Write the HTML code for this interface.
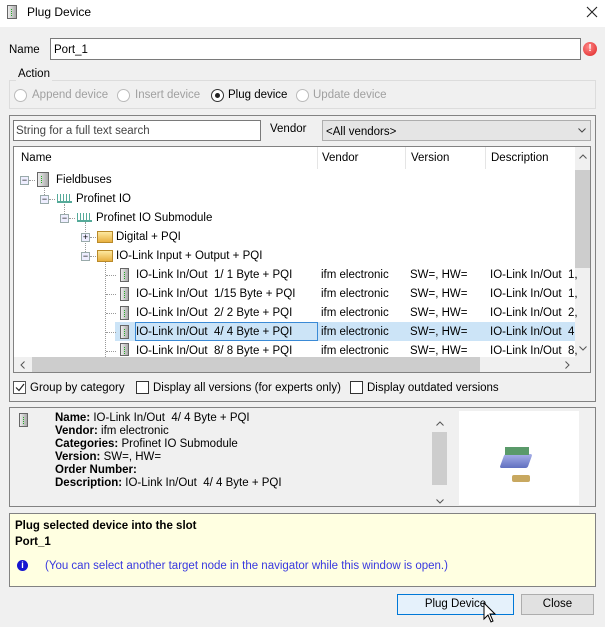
<!DOCTYPE html>
<html><head><style>
*{box-sizing:border-box;margin:0;padding:0}
body{width:605px;height:627px;background:#f0f0f0;font-family:"Liberation Sans",sans-serif;font-size:11.5px;color:#000;position:relative;overflow:hidden}
.a{position:absolute;white-space:nowrap}
.t{line-height:14px}
.ex{position:absolute;width:9px;height:9px;border:1px solid #9aa;background:#eef;font-size:9px;line-height:7px;text-align:center;color:#000}
.dev{position:absolute;width:9px;height:14px;border:1px solid #666;background:linear-gradient(90deg,#eee,#aaa);}
.dev:after{content:"";position:absolute;left:3px;top:3px;width:1px;height:7px;border-left:1px dotted #2a2}
.fold{position:absolute;width:16px;height:12px;background:linear-gradient(#fde9a0,#e8b040);border:1px solid #b98a2a}
.pnio{position:absolute;width:15px;height:9px;border-bottom:2px solid #5a9;background:repeating-linear-gradient(90deg,#5a9 0 1px,transparent 1px 3px)}
.cb{position:absolute;width:13px;height:13px;border:1px solid #333;background:#fff}
.rd{position:absolute;width:13px;height:13px;border:1px solid #bbb;border-radius:50%;background:#fff}
.dot{position:absolute;border-top:1px dotted #999;height:0}
.vdot{position:absolute;border-left:1px dotted #999;width:0}
</style></head><body>
<div class="a" style="left:0;top:0;width:605px;height:27px;background:#fff"></div>
<div class="dev" style="left:7px;top:5px;width:10px;height:14px"></div>
<div class="a t" style="left:27px;top:5px;font-size:12px">Plug Device</div>
<svg class="a" style="left:586px;top:6px" width="12" height="12" viewBox="0 0 12 12"><path d="M1 1 L11 11 M11 1 L1 11" stroke="#222" stroke-width="1.1"/></svg>

<div class="a t" style="left:9px;top:43px">Name</div>
<div class="a t" style="left:50px;top:38px;width:531px;height:22px;border:1px solid #7a7a7a;background:#fff;padding:4px 3px">Port_1</div>
<div class="a" style="left:583px;top:42px;width:14px;height:14px;border-radius:50%;background:radial-gradient(circle at 40% 35%,#f88,#d22);color:#fff;font-weight:bold;font-size:10px;text-align:center;line-height:14px">!</div>

<div class="a" style="left:9px;top:80px;width:587px;height:29px;border:1px solid #dcdcdc"></div>
<div class="a t" style="left:16px;top:67px;background:#f0f0f0;padding:0 2px">Action</div>
<div class="rd" style="left:14px;top:89px"></div><div class="a t" style="left:32px;top:88px;color:#a0a0a0">Append device</div>
<div class="rd" style="left:117px;top:89px"></div><div class="a t" style="left:135px;top:88px;color:#a0a0a0">Insert device</div>
<div class="rd" style="left:211px;top:89px;border-color:#333"><div style="position:absolute;left:3px;top:3px;width:5px;height:5px;border-radius:50%;background:#222"></div></div><div class="a t" style="left:228px;top:88px">Plug device</div>
<div class="rd" style="left:296px;top:89px"></div><div class="a t" style="left:313px;top:88px;color:#a0a0a0">Update device</div>

<div class="a" style="left:9px;top:115px;width:587px;height:287px;border:1px solid #828282"></div>
<div class="a t" style="left:13px;top:120px;width:248px;height:21px;border:1px solid #7a7a7a;background:#fff;padding:3px 2px;color:#444">String for a full text search</div>
<div class="a t" style="left:270px;top:122px">Vendor</div>
<div class="a t" style="left:322px;top:120px;width:269px;height:21px;border:1px solid #adadad;background:#e5e5e5;padding:4px 3px">&lt;All vendors&gt;</div>
<svg class="a" style="left:578px;top:128px" width="8" height="5" viewBox="0 0 8 5"><path d="M0.5 0.5 L4 4 L7.5 0.5" stroke="#444" fill="none"/></svg>

<div class="a" style="left:13px;top:146px;width:578px;height:227px;border:1px solid #828282;background:#fff"></div>
<div class="a t" style="left:21px;top:151px">Name</div>
<div class="a t" style="left:322px;top:151px">Vendor</div>
<div class="a t" style="left:411px;top:151px">Version</div>
<div class="a t" style="left:491px;top:151px">Description</div>
<div class="a" style="left:317px;top:147px;width:1px;height:22px;background:#e5e5e5"></div>
<div class="a" style="left:405px;top:147px;width:1px;height:22px;background:#e5e5e5"></div>
<div class="a" style="left:485px;top:147px;width:1px;height:22px;background:#e5e5e5"></div>
<div class="a" style="left:575px;top:147px;width:15px;height:210px;background:#f0f0f0"></div>
<div class="a" style="left:575px;top:170px;width:15px;height:98px;background:#cdcdcd"></div>
<svg class="a" style="left:579px;top:154px" width="8" height="5" viewBox="0 0 8 5"><path d="M0.5 4.5 L4 1 L7.5 4.5" stroke="#555" fill="none"/></svg>
<svg class="a" style="left:579px;top:346px" width="8" height="5" viewBox="0 0 8 5"><path d="M0.5 0.5 L4 4 L7.5 0.5" stroke="#555" fill="none"/></svg>
<div class="a" style="left:14px;top:357px;width:576px;height:15px;background:#f0f0f0"></div>
<div class="a" style="left:32px;top:357px;width:448px;height:15px;background:#cdcdcd"></div>
<svg class="a" style="left:20px;top:361px" width="5" height="8" viewBox="0 0 5 8"><path d="M4.5 0.5 L1 4 L4.5 7.5" stroke="#555" fill="none"/></svg>
<svg class="a" style="left:565px;top:361px" width="5" height="8" viewBox="0 0 5 8"><path d="M0.5 0.5 L4 4 L0.5 7.5" stroke="#555" fill="none"/></svg>

<!-- tree -->
<div class="vdot" style="left:44px;top:185px;height:10px"></div>
<div class="vdot" style="left:64px;top:204px;height:10px"></div>
<div class="vdot" style="left:85px;top:222px;height:30px"></div>
<div class="vdot" style="left:105px;top:261px;height:96px"></div>
<div class="ex" style="left:20px;top:176px">−</div><div class="dot" style="left:29px;top:180px;width:6px"></div>
<div class="dev" style="left:37px;top:172px;width:12px;height:15px"></div><div class="a t" style="left:56px;top:173px">Fieldbuses</div>
<div class="ex" style="left:40px;top:195px">−</div><div class="dot" style="left:49px;top:199px;width:6px"></div>
<div class="pnio" style="left:57px;top:194px"></div><div class="a t" style="left:76px;top:192px">Profinet IO</div>
<div class="ex" style="left:60px;top:214px">−</div><div class="dot" style="left:69px;top:218px;width:6px"></div>
<div class="pnio" style="left:77px;top:213px"></div><div class="a t" style="left:96px;top:211px">Profinet IO Submodule</div>
<div class="ex" style="left:81px;top:233px">+</div><div class="dot" style="left:90px;top:237px;width:6px"></div>
<div class="fold" style="left:97px;top:231px"></div><div class="a t" style="left:116px;top:230px">Digital + PQI</div>
<div class="ex" style="left:81px;top:252px">−</div><div class="dot" style="left:90px;top:256px;width:6px"></div>
<div class="fold" style="left:97px;top:250px"></div><div class="a t" style="left:116px;top:249px">IO-Link Input + Output + PQI</div>

<div class="a" style="left:115px;top:322px;width:460px;height:19px;background:#cce4f7"></div>
<div class="a" style="left:135px;top:322px;width:183px;height:19px;border:1px solid #3a8ad6"></div>

<div class="dot" style="left:106px;top:275px;width:10px"></div><div class="dev" style="left:120px;top:268px"></div><div class="a t" style="left:136px;top:268px">IO-Link In/Out&nbsp; 1/ 1 Byte + PQI</div><div class="a t" style="left:321px;top:268px">ifm electronic</div><div class="a t" style="left:410px;top:268px">SW=, HW=</div><div class="a t" style="left:490px;top:268px">IO-Link In/Out&nbsp; 1,</div>
<div class="dot" style="left:106px;top:294px;width:10px"></div><div class="dev" style="left:120px;top:287px"></div><div class="a t" style="left:136px;top:287px">IO-Link In/Out&nbsp; 1/15 Byte + PQI</div><div class="a t" style="left:321px;top:287px">ifm electronic</div><div class="a t" style="left:410px;top:287px">SW=, HW=</div><div class="a t" style="left:490px;top:287px">IO-Link In/Out&nbsp; 1,</div>
<div class="dot" style="left:106px;top:313px;width:10px"></div><div class="dev" style="left:120px;top:306px"></div><div class="a t" style="left:136px;top:306px">IO-Link In/Out&nbsp; 2/ 2 Byte + PQI</div><div class="a t" style="left:321px;top:306px">ifm electronic</div><div class="a t" style="left:410px;top:306px">SW=, HW=</div><div class="a t" style="left:490px;top:306px">IO-Link In/Out&nbsp; 2,</div>
<div class="dot" style="left:106px;top:332px;width:10px"></div><div class="dev" style="left:120px;top:325px"></div><div class="a t" style="left:136px;top:325px">IO-Link In/Out&nbsp; 4/ 4 Byte + PQI</div><div class="a t" style="left:321px;top:325px">ifm electronic</div><div class="a t" style="left:410px;top:325px">SW=, HW=</div><div class="a t" style="left:490px;top:325px;width:85px;overflow:hidden">IO-Link In/Out&nbsp; 4,</div>
<div class="dot" style="left:106px;top:351px;width:10px"></div><div class="dev" style="left:120px;top:343px;height:13px"></div><div class="a t" style="left:136px;top:344px">IO-Link In/Out&nbsp; 8/ 8 Byte + PQI</div><div class="a t" style="left:321px;top:344px">ifm electronic</div><div class="a t" style="left:410px;top:344px">SW=, HW=</div><div class="a t" style="left:490px;top:344px">IO-Link In/Out&nbsp; 8,</div>

<div class="cb" style="left:13px;top:381px;border-color:#555"></div><svg class="a" style="left:15px;top:383px" width="10" height="9" viewBox="0 0 10 9"><path d="M1 4.5 L4 7.5 L9 1" stroke="#222" stroke-width="1.2" fill="none"/></svg><div class="a t" style="left:30px;top:381px">Group by category</div>
<div class="cb" style="left:136px;top:381px"></div><div class="a t" style="left:153px;top:381px">Display all versions (for experts only)</div>
<div class="cb" style="left:350px;top:381px"></div><div class="a t" style="left:367px;top:381px">Display outdated versions</div>

<div class="a" style="left:9px;top:407px;width:587px;height:100px;border:1px solid #828282"></div>
<div class="dev" style="left:19px;top:413px"></div>
<div class="a" style="left:55px;top:412px;line-height:13px;font-size:11.5px">
<b>Name:</b> IO-Link In/Out&nbsp; 4/ 4 Byte + PQI<br><b>Vendor:</b> ifm electronic<br><b>Categories:</b> Profinet IO Submodule<br><b>Version:</b> SW=, HW=<br><b>Order Number:</b><br><b>Description:</b> IO-Link In/Out&nbsp; 4/ 4 Byte + PQI</div>
<div class="a" style="left:432px;top:412px;width:15px;height:83px;background:#f0f0f0"></div>
<div class="a" style="left:432px;top:432px;width:15px;height:53px;background:#cdcdcd"></div>
<svg class="a" style="left:436px;top:421px" width="8" height="5" viewBox="0 0 8 5"><path d="M0.5 4.5 L4 1 L7.5 4.5" stroke="#555" fill="none"/></svg>
<svg class="a" style="left:436px;top:499px" width="8" height="5" viewBox="0 0 8 5"><path d="M0.5 0.5 L4 4 L7.5 0.5" stroke="#555" fill="none"/></svg>
<div class="a" style="left:459px;top:411px;width:120px;height:94px;background:#fff"></div>
<div class="a" style="left:502px;top:454px;width:28px;height:14px;background:linear-gradient(#a8b0e8,#6070c0);transform:skewX(-20deg);border-radius:2px"></div>
<div class="a" style="left:505px;top:447px;width:24px;height:8px;background:#5a9a6a"></div>
<div class="a" style="left:512px;top:475px;width:18px;height:7px;background:#c8a860;border-radius:2px"></div>

<div class="a" style="left:9px;top:513px;width:587px;height:74px;border:1px solid #828282;background:#ffffe1"></div>
<div class="a t" style="left:15px;top:519px;font-weight:bold">Plug selected device into the slot</div>
<div class="a t" style="left:15px;top:535px;font-weight:bold">Port_1</div>
<div class="a" style="left:17px;top:560px;width:11px;height:11px;border-radius:50%;background:#1515d0;color:#fff;font-size:9px;font-weight:bold;text-align:center;line-height:11px">i</div>
<div class="a t" style="left:45px;top:559px;color:#3838e0">(You can select another target node in the navigator while this window is open.)</div>

<div class="a" style="left:397px;top:594px;width:117px;height:21px;border:1px solid #0078d7;background:#e5f1fb;text-align:center;line-height:19px">Plug Device</div>
<div class="a" style="left:521px;top:594px;width:73px;height:21px;border:1px solid #adadad;background:#e1e1e1;text-align:center;line-height:19px">Close</div>
<svg class="a" style="left:483px;top:602px" width="14" height="22" viewBox="0 0 14 22"><path d="M1 1 V17 L5 13 L8 20 L10 19 L7 12 L12 12 Z" fill="#fff" stroke="#000" stroke-width="1"/></svg>
</body></html>
